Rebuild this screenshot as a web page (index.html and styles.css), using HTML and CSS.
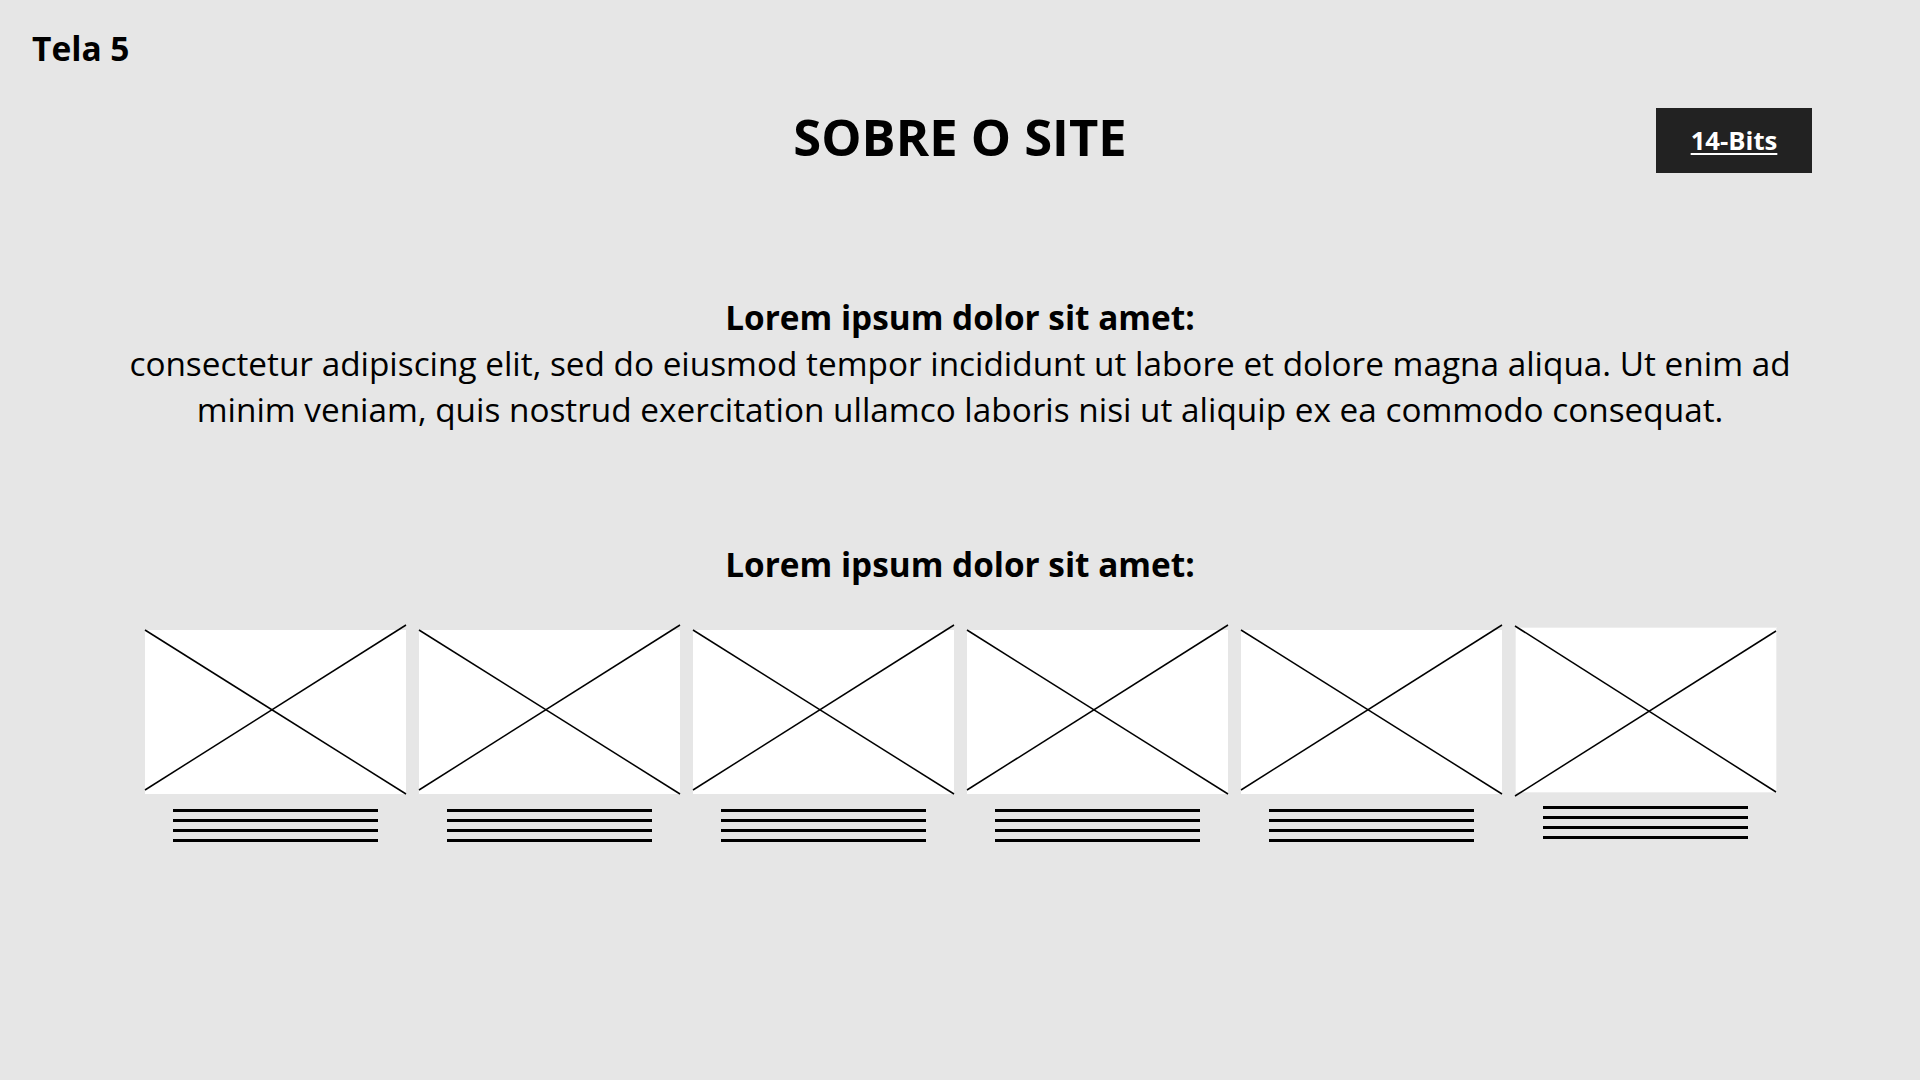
FILE: index.html
```html
<!DOCTYPE html>
<html lang="pt-BR">
<head>
<meta charset="utf-8">
<title>Tela 5 - Sobre o site</title>
<link rel="stylesheet" href="styles.css">
</head>
<body>
<div class="page">
  <div class="screen-label">Tela 5</div>

  <header class="topbar">
    <div class="topbar-side"></div>
    <h1 class="title">SOBRE O SITE</h1>
    <div class="topbar-side topbar-actions">
      <a class="brand-btn" href="#">14-Bits</a>
    </div>
  </header>

  <section class="about">
    <p class="about-text"><strong class="about-lead">Lorem ipsum dolor sit amet:</strong><br>consectetur adipiscing elit, sed do eiusmod tempor incididunt ut labore et dolore magna aliqua. Ut enim ad<br>minim veniam, quis nostrud exercitation ullamco laboris nisi ut aliquip ex ea commodo consequat.</p>
  </section>

  <section class="gallery">
    <h2 class="gallery-title">Lorem ipsum dolor sit amet:</h2>
    <div class="cards">
      <div class="card">
        <svg class="thumb" viewBox="0 0 261 171" width="261" height="171">
          <rect class="thumb-bg" x="0" y="5" width="261" height="164"/>
          <line class="thumb-x" x1="0" y1="5" x2="261" y2="169"/>
          <line class="thumb-x" x1="0" y1="165" x2="261" y2="0"/>
        </svg>
        <div class="caption"><span></span><span></span><span></span><span></span></div>
      </div>
      <div class="card">
        <svg class="thumb" viewBox="0 0 261 171" width="261" height="171">
          <rect class="thumb-bg" x="0" y="5" width="261" height="164"/>
          <line class="thumb-x" x1="0" y1="5" x2="261" y2="169"/>
          <line class="thumb-x" x1="0" y1="165" x2="261" y2="0"/>
        </svg>
        <div class="caption"><span></span><span></span><span></span><span></span></div>
      </div>
      <div class="card">
        <svg class="thumb" viewBox="0 0 261 171" width="261" height="171">
          <rect class="thumb-bg" x="0" y="5" width="261" height="164"/>
          <line class="thumb-x" x1="0" y1="5" x2="261" y2="169"/>
          <line class="thumb-x" x1="0" y1="165" x2="261" y2="0"/>
        </svg>
        <div class="caption"><span></span><span></span><span></span><span></span></div>
      </div>
      <div class="card">
        <svg class="thumb" viewBox="0 0 261 171" width="261" height="171">
          <rect class="thumb-bg" x="0" y="5" width="261" height="164"/>
          <line class="thumb-x" x1="0" y1="5" x2="261" y2="169"/>
          <line class="thumb-x" x1="0" y1="165" x2="261" y2="0"/>
        </svg>
        <div class="caption"><span></span><span></span><span></span><span></span></div>
      </div>
      <div class="card">
        <svg class="thumb" viewBox="0 0 261 171" width="261" height="171">
          <rect class="thumb-bg" x="0" y="5" width="261" height="164"/>
          <line class="thumb-x" x1="0" y1="5" x2="261" y2="169"/>
          <line class="thumb-x" x1="0" y1="165" x2="261" y2="0"/>
        </svg>
        <div class="caption"><span></span><span></span><span></span><span></span></div>
      </div>
      <div class="card card-alt">
        <svg class="thumb" viewBox="0 0 261 172" width="261" height="172">
          <rect class="thumb-bg thumb-bg-outlined" x="0.5" y="2.5" width="261" height="165"/>
          <line class="thumb-x" x1="0" y1="1" x2="261" y2="167"/>
          <line class="thumb-x" x1="0" y1="171" x2="261" y2="6"/>
        </svg>
        <div class="caption"><span></span><span></span><span></span><span></span></div>
      </div>
    </div>
  </section>
</div>
</body>
</html>
```

FILE: styles.css
```css
html, body {
  margin: 0;
  padding: 0;
}

body {
  background: #e6e6e6;
  color: #000;
  font-family: "Open Sans", "Noto Sans", "DejaVu Sans", sans-serif;
  width: 1920px;
  height: 1080px;
  overflow: hidden;
}

.page {
  display: flex;
  flex-direction: column;
}

.screen-label {
  padding: 25px 0 0 32px;
  font-size: 33.5px;
  line-height: 47px;
  font-weight: 700;
}

.topbar {
  margin-top: 36px;
  display: grid;
  grid-template-columns: 1fr auto 1fr;
  align-items: start;
  height: 65px;
}

.title {
  margin: 0;
  font-size: 50.7px;
  line-height: 58px;
  font-weight: 700;
  text-align: center;
}

.topbar-actions {
  display: flex;
  justify-content: flex-end;
  padding-right: 108px;
}

.brand-btn {
  display: block;
  width: 156px;
  height: 65px;
  background: #222222;
  color: #ffffff;
  font-size: 25.7px;
  line-height: 65px;
  font-weight: 700;
  text-align: center;
  text-decoration: underline;
  text-decoration-thickness: 2px;
  text-underline-offset: 3px;
}

.about {
  margin-top: 121px;
  display: flex;
  justify-content: center;
}

.about-text {
  margin: 0;
  font-size: 33.35px;
  line-height: 46px;
  text-align: center;
  white-space: nowrap;
}

.about-lead {
  font-weight: 700;
}

.gallery {
  margin-top: 109px;
  display: flex;
  flex-direction: column;
  align-items: center;
}

.gallery-title {
  margin: 0;
  font-size: 33.35px;
  line-height: 46px;
  font-weight: 700;
}

.cards {
  margin-top: 38px;
  display: flex;
  gap: 13px;
  align-items: flex-start;
}

.card {
  width: 261px;
  display: flex;
  flex-direction: column;
  align-items: center;
}

.thumb {
  display: block;
  overflow: visible;
}

.thumb-bg {
  fill: #ffffff;
}

.thumb-bg-outlined {
  stroke: #eeeeee;
  stroke-width: 1;
}

.thumb-x {
  stroke: #000;
  stroke-width: 1.5;
}

.caption {
  margin-top: 12.5px;
  width: 205px;
  display: flex;
  flex-direction: column;
  gap: 7.33px;
}

.card-alt .caption {
  margin-top: 8.5px;
}

.caption span {
  display: block;
  height: 3px;
  background: #000;
}
```
